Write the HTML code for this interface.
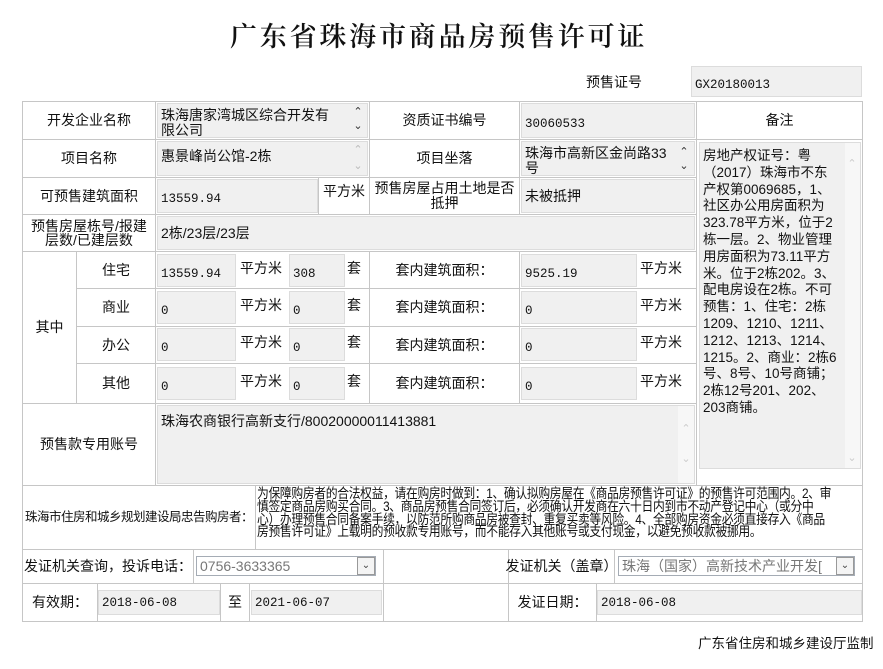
<!DOCTYPE html>
<html><head><meta charset="utf-8"><style>
*{margin:0;padding:0;box-sizing:border-box}
body{width:883px;height:669px;background:#fff;position:relative;font-family:"Liberation Sans","Noto Sans CJK SC",sans-serif;font-size:14px;color:#111;overflow:hidden}
.c{position:absolute;border:1px solid #c6c6c6;display:flex;align-items:center;justify-content:center;text-align:center;line-height:15px}
.i{position:absolute;background:#f0f0f0;border:1px solid #dcdcdc;display:flex;align-items:center;padding-left:3px;font-size:13px;white-space:nowrap;overflow:hidden}
.n{font-family:"Liberation Mono","Noto Sans CJK SC",monospace;font-size:12.5px;padding-top:6px}
.t{position:absolute;white-space:nowrap}
.sb{position:absolute;width:12px;height:12px;color:#999;font-size:11px;line-height:12px;text-align:center}
</style></head><body>
<div class="t" style="left:230px;top:15px;font-family:'Liberation Serif','Noto Serif CJK SC',serif;font-weight:600;font-size:27px;letter-spacing:2.8px">广东省珠海市商品房预售许可证</div>
<div class="t" style="left:586px;top:72px">预售证号</div>
<div class="i n" style="left:691px;top:66px;width:171px;height:31px">GX20180013</div>

<!-- row1 -->
<div class="c" style="left:22px;top:101px;width:134px;height:39px">开发企业名称</div>
<div class="c" style="left:155px;top:101px;width:215px;height:39px"></div>
<div class="i" style="left:157px;top:103px;width:211px;height:35px;align-items:flex-start;line-height:15px;padding-top:4px;font-size:14px;display:block">珠海唐家湾城区综合开发有<br>限公司</div>
<div class="sb" style="left:352px;top:106px;color:#333">&#8963;</div><div class="sb" style="left:352px;top:120px;color:#333">&#8964;</div>
<div class="c" style="left:369px;top:101px;width:151px;height:39px">资质证书编号</div>
<div class="c" style="left:519px;top:101px;width:178px;height:39px"></div>
<div class="i n" style="left:521px;top:103px;width:174px;height:35px">30060533</div>
<div class="c" style="left:696px;top:101px;width:167px;height:39px">备注</div>

<!-- row2 -->
<div class="c" style="left:22px;top:139px;width:134px;height:39px">项目名称</div>
<div class="c" style="left:155px;top:139px;width:215px;height:39px"></div>
<div class="i" style="left:157px;top:141px;width:211px;height:35px;align-items:flex-start;padding-top:4px;font-size:14px">惠景峰尚公馆-2栋</div>
<div class="sb" style="left:352px;top:144px;color:#bbb">&#8963;</div><div class="sb" style="left:352px;top:160px;color:#bbb">&#8964;</div>
<div class="c" style="left:369px;top:139px;width:151px;height:39px">项目坐落</div>
<div class="c" style="left:519px;top:139px;width:178px;height:39px"></div>
<div class="i" style="left:521px;top:141px;width:174px;height:35px;display:block;padding-top:4px;line-height:15px;font-size:14px">珠海市高新区金尚路33<br>号</div>
<div class="sb" style="left:678px;top:146px;color:#333">&#8963;</div><div class="sb" style="left:678px;top:160px;color:#333">&#8964;</div>

<!-- remarks -->
<div class="c" style="left:696px;top:139px;width:167px;height:347px"></div>
<div class="i" style="left:699px;top:142px;width:162px;height:327px;display:block;padding:5px 0 0 3px;font-size:13.5px;line-height:16.8px;background:linear-gradient(90deg,#f0f0f0 145px,#f7f7f7 145px)">房地产权证号：粤<br>（2017）珠海市不东<br>产权第0069685，1、<br>社区办公用房面积为<br>323.78平方米，位于2<br>栋一层。2、物业管理<br>用房面积为73.11平方<br>米。位于2栋202。3、<br>配电房设在2栋。不可<br>预售：1、住宅：2栋<br>1209、1210、1211、<br>1212、1213、1214、<br>1215。2、商业：2栋6<br>号、8号、10号商铺；<br>2栋12号201、202、<br>203商铺。</div>
<div class="sb" style="left:846px;top:158px;color:#ccc">&#8963;</div><div class="sb" style="left:846px;top:452px;color:#ccc">&#8964;</div>

<!-- row3 -->
<div class="c" style="left:22px;top:177px;width:134px;height:38px">可预售建筑面积</div>
<div class="c" style="left:155px;top:177px;width:164px;height:38px"></div>
<div class="i n" style="left:157px;top:179px;width:161px;height:34px">13559.94</div>
<div class="c" style="left:318px;top:177px;width:52px;height:38px;align-items:flex-start;padding-top:6px">平方米</div>
<div class="c" style="left:369px;top:177px;width:151px;height:38px;white-space:nowrap">预售房屋占用土地是否<br>抵押</div>
<div class="c" style="left:519px;top:177px;width:178px;height:38px"></div>
<div class="i" style="left:521px;top:179px;width:174px;height:34px;font-size:14px">未被抵押</div>

<!-- row4 -->
<div class="c" style="left:22px;top:214px;width:134px;height:38px;line-height:14px;white-space:nowrap">预售房屋栋号/报建<br>层数/已建层数</div>
<div class="c" style="left:155px;top:214px;width:542px;height:38px"></div>
<div class="i" style="left:157px;top:216px;width:538px;height:34px;font-size:14px">2栋/23层/23层</div>

<!-- sub rows -->
<div class="c" style="left:22px;top:251px;width:55px;height:153px">其中</div>
<div class="c" style="left:76px;top:251px;width:80px;height:38px">住宅</div>
<div class="c" style="left:76px;top:288px;width:80px;height:39px">商业</div>
<div class="c" style="left:76px;top:326px;width:80px;height:38px">办公</div>
<div class="c" style="left:76px;top:363px;width:80px;height:41px">其他</div>

<div class="c" style="left:155px;top:251px;width:215px;height:38px"></div>
<div class="c" style="left:155px;top:288px;width:215px;height:39px"></div>
<div class="c" style="left:155px;top:326px;width:215px;height:38px"></div>
<div class="c" style="left:155px;top:363px;width:215px;height:41px"></div>
<div class="c" style="left:369px;top:251px;width:151px;height:38px">套内建筑面积：</div>
<div class="c" style="left:369px;top:288px;width:151px;height:39px">套内建筑面积：</div>
<div class="c" style="left:369px;top:326px;width:151px;height:38px">套内建筑面积：</div>
<div class="c" style="left:369px;top:363px;width:151px;height:41px">套内建筑面积：</div>
<div class="c" style="left:519px;top:251px;width:178px;height:38px"></div>
<div class="c" style="left:519px;top:288px;width:178px;height:39px"></div>
<div class="c" style="left:519px;top:326px;width:178px;height:38px"></div>
<div class="c" style="left:519px;top:363px;width:178px;height:41px"></div>

<div class="i n" style="left:157px;top:254px;width:79px;height:33px">13559.94</div>
<div class="i n" style="left:289px;top:254px;width:56px;height:33px">308</div>
<div class="i n" style="left:521px;top:254px;width:116px;height:33px">9525.19</div>
<div class="i n" style="left:157px;top:291px;width:79px;height:33px">0</div>
<div class="i n" style="left:289px;top:291px;width:56px;height:33px">0</div>
<div class="i n" style="left:521px;top:291px;width:116px;height:33px">0</div>
<div class="i n" style="left:157px;top:328px;width:79px;height:33px">0</div>
<div class="i n" style="left:289px;top:328px;width:56px;height:33px">0</div>
<div class="i n" style="left:521px;top:328px;width:116px;height:33px">0</div>
<div class="i n" style="left:157px;top:367px;width:79px;height:33px">0</div>
<div class="i n" style="left:289px;top:367px;width:56px;height:33px">0</div>
<div class="i n" style="left:521px;top:367px;width:116px;height:33px">0</div>

<div class="t" style="left:240px;top:258px">平方米</div><div class="t" style="left:347px;top:258px">套</div><div class="t" style="left:640px;top:258px">平方米</div>
<div class="t" style="left:240px;top:295px">平方米</div><div class="t" style="left:347px;top:295px">套</div><div class="t" style="left:640px;top:295px">平方米</div>
<div class="t" style="left:240px;top:332px">平方米</div><div class="t" style="left:347px;top:332px">套</div><div class="t" style="left:640px;top:332px">平方米</div>
<div class="t" style="left:240px;top:371px">平方米</div><div class="t" style="left:347px;top:371px">套</div><div class="t" style="left:640px;top:371px">平方米</div>

<!-- account -->
<div class="c" style="left:22px;top:403px;width:134px;height:83px">预售款专用账号</div>
<div class="c" style="left:155px;top:403px;width:542px;height:83px"></div>
<div class="i" style="left:157px;top:405px;width:538px;height:79px;align-items:flex-start;padding-top:5px;font-size:14px;background:linear-gradient(90deg,#f0f0f0 520px,#f7f7f7 520px)">珠海农商银行高新支行/80020000011413881</div>
<div class="sb" style="left:680px;top:423px;color:#ccc">&#8963;</div><div class="sb" style="left:680px;top:453px;color:#ccc">&#8964;</div>

<!-- notice -->
<div class="c" style="left:22px;top:485px;width:234px;height:65px;font-size:12.5px;white-space:nowrap;letter-spacing:-0.5px;justify-content:flex-start;padding-left:2px">珠海市住房和城乡规划建设局忠告购房者：</div>
<div class="c" style="left:255px;top:485px;width:608px;height:65px;display:block;text-align:left;padding:0;overflow:hidden">
<div style="position:absolute;left:1px;top:2px;font-size:13.5px;line-height:12.8px;letter-spacing:-0.4px;white-space:nowrap;transform:scaleX(0.875);transform-origin:0 0;text-align:left">为保障购房者的合法权益，请在购房时做到：1、确认拟购房屋在《商品房预售许可证》的预售许可范围内。2、审<br>慎签定商品房购买合同。3、商品房预售合同签订后，必须确认开发商在六十日内到市不动产登记中心（或分中<br>心）办理预售合同备案手续，以防范所购商品房被查封、重复买卖等风险。4、全部购房资金必须直接存入《商品<br>房预售许可证》上载明的预收款专用账号，而不能存入其他账号或支付现金，以避免预收款被挪用。</div></div>

<!-- phone -->
<div class="c" style="left:22px;top:549px;width:172px;height:35px;white-space:nowrap">发证机关查询，投诉电话：</div>
<div class="c" style="left:193px;top:549px;width:191px;height:35px"></div>
<div class="c" style="left:383px;top:549px;width:126px;height:35px"></div>
<div class="c" style="left:508px;top:549px;width:107px;height:35px;white-space:nowrap">发证机关（盖章）</div>
<div class="c" style="left:614px;top:549px;width:249px;height:35px"></div>
<div class="i" style="left:196px;top:556px;width:180px;height:20px;background:#fff;border:1px solid #a5acb5;color:#777;font-size:14px">0756-3633365</div>
<div style="position:absolute;left:357px;top:557px;width:18px;height:18px;border:1px solid #999;background:#f4f4f4;font-size:10px;line-height:16px;text-align:center;color:#444">&#8964;</div>
<div class="i" style="left:618px;top:556px;width:237px;height:20px;background:#fff;border:1px solid #a5acb5;color:#777;font-size:14px;padding-right:20px">珠海（国家）高新技术产业开发[</div>
<div style="position:absolute;left:836px;top:557px;width:18px;height:18px;border:1px solid #999;background:#f4f4f4;font-size:10px;line-height:16px;text-align:center;color:#444">&#8964;</div>

<!-- validity -->
<div class="c" style="left:22px;top:583px;width:76px;height:39px">有效期：</div>
<div class="c" style="left:97px;top:583px;width:124px;height:39px"></div>
<div class="c" style="left:220px;top:583px;width:30px;height:39px">至</div>
<div class="c" style="left:249px;top:583px;width:135px;height:39px"></div>
<div class="c" style="left:383px;top:583px;width:126px;height:39px"></div>
<div class="c" style="left:508px;top:583px;width:89px;height:39px">发证日期：</div>
<div class="c" style="left:596px;top:583px;width:267px;height:39px"></div>
<div class="i n" style="left:98px;top:590px;width:122px;height:25px;padding-top:0">2018-06-08</div>
<div class="i n" style="left:251px;top:590px;width:131px;height:25px;padding-top:0">2021-06-07</div>
<div class="i n" style="left:597px;top:590px;width:265px;height:25px;padding-top:0">2018-06-08</div>

<div class="t" style="left:698px;top:632px;font-size:13.5px">广东省住房和城乡建设厅监制</div>
</body></html>
